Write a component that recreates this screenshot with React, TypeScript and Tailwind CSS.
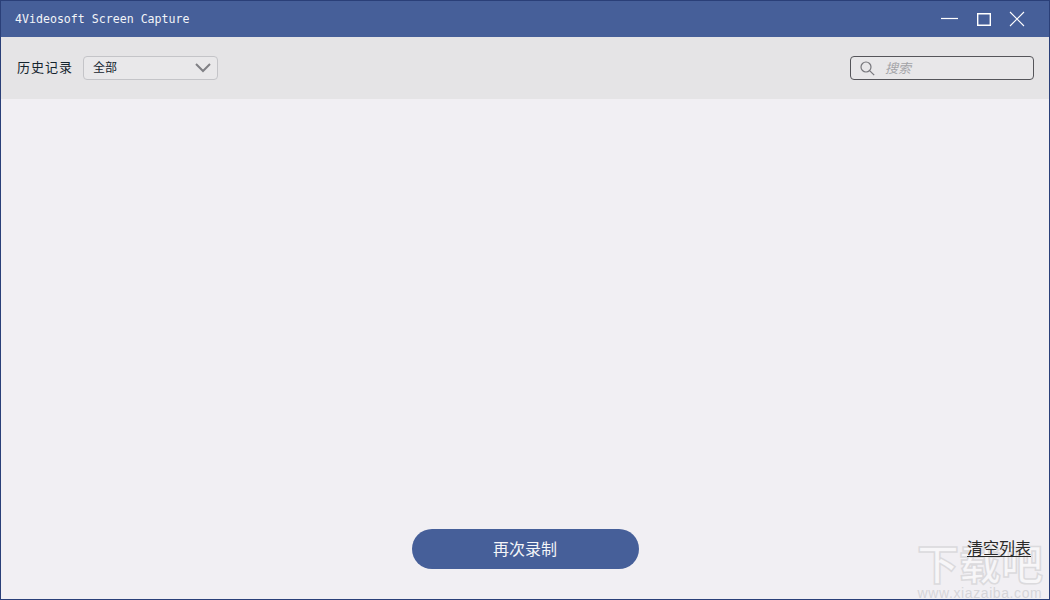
const cjk = "font-['Liberation_Sans','Noto_Sans_CJK_SC',sans-serif]"

function TitleBar() {
  return (
    <div className="flex h-[36px] items-center justify-between bg-[#465f99] pl-[14px] pr-[24px]">
      <span className="mt-[2px] font-['DejaVu_Sans_Mono',monospace] text-[11.6px] leading-none text-[#f2f4f8]">
        4Videosoft Screen Capture
      </span>
      <div className="flex items-center gap-[18px] text-white">
        <svg width="18" height="14" viewBox="0 0 18 14" fill="none" stroke="currentColor" strokeWidth="1.2">
          <path d="M0 6.5h17" />
        </svg>
        <svg width="14" height="13" viewBox="0 0 14 13" fill="none" stroke="currentColor" strokeWidth="1.4">
          <path d="M.7.7h12.6v11.6H.7z" />
        </svg>
        <svg width="16" height="16" viewBox="0 0 16 16" fill="none" stroke="currentColor" strokeWidth="1.1">
          <path d="M1 1l14 14M15 1L1 15" />
        </svg>
      </div>
    </div>
  )
}

function Toolbar() {
  return (
    <div className="flex h-[62px] items-center justify-between bg-[#e5e4e6] pl-[16px] pr-[15px]">
      <div className="flex items-center gap-[10px]">
        <span className="text-[13px] tracking-[1px] text-[#14242e]">历史记录</span>
        <div className="flex h-[24px] w-[135px] items-center justify-between rounded-[4px] border border-[#c4c4c8] bg-[#e9e8ea] pl-[9px] pr-[6px]">
          <span className="text-[12px] text-[#14242e]">全部</span>
          <svg width="16" height="10" viewBox="0 0 16 10" fill="none" stroke="#808085" strokeWidth="2">
            <path d="M1 1l7 7 7-7" />
          </svg>
        </div>
      </div>
      <div className="flex h-[24px] w-[184px] items-center gap-[10px] rounded-[4px] border border-[#55555a] bg-[#e8e7e9] pl-[9px]">
        <svg width="15" height="15" viewBox="0 0 15 15" fill="none" stroke="#77777c" strokeWidth="1.2">
          <circle cx="6" cy="6" r="5" />
          <path d="M9.6 9.6l4.6 4.6" />
        </svg>
        <span className="pt-[1px] text-[13px] italic text-[#a3a3a7]">搜索</span>
      </div>
    </div>
  )
}

export default function App() {
  return (
    <div className={`${cjk} relative flex h-[600px] w-[1050px] flex-col overflow-hidden border border-[#2a3f78] bg-[#f1eff3]`}>
      <TitleBar />
      <Toolbar />
      <div className="flex-1" />
      <div className="relative flex h-[70px] items-start justify-center">
        <button className="h-[40px] w-[227px] rounded-full bg-[#465f99] pt-[1px] text-[16px] text-[#f4f5f8]">
          再次录制
        </button>
        <span className="absolute right-[18px] top-[13px] z-10 border-b border-[#2a2a2a] text-[16px] leading-[14px] text-[#2a2a2a]">
          清空列表
        </span>
      </div>
      {/* watermark */}
      <div className="pointer-events-none absolute bottom-0 right-[3px] flex w-[132px] flex-col items-center">
        <span className="text-[42px] font-bold leading-[44px] text-[#f7f6f8] [-webkit-text-stroke:1.5px_#dbdadd]">下载吧</span>
        <span className="text-[14px] leading-[11px] tracking-[0.6px] text-[#d6d5d9]">www.xiazaiba.com</span>
      </div>
    </div>
  )
}
